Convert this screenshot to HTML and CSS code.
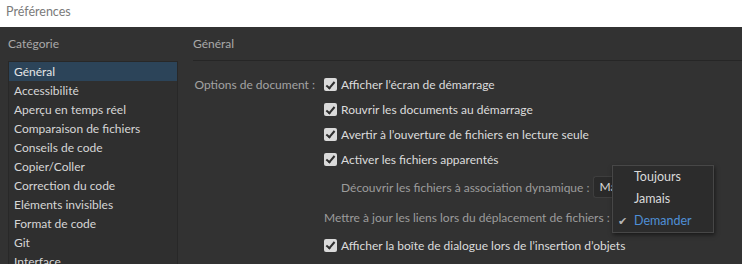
FILE: index.html
```html
<!DOCTYPE html>
<html lang="fr">
<head>
<meta charset="utf-8">
<title>Préférences</title>
<link rel="stylesheet" href="styles.css">
</head>
<body>
<div class="titlebar">Préférences</div>

<div class="window">
   <div class="sidebar">
      <div class="heading">Catégorie</div>
      <ul class="catlist">
         <li class="selected">Général</li>
         <li>Accessibilité</li>
         <li>Aperçu en temps réel</li>
         <li>Comparaison de fichiers</li>
         <li>Conseils de code</li>
         <li>Copier/Coller</li>
         <li>Correction du code</li>
         <li>Eléments invisibles</li>
         <li>Format de code</li>
         <li>Git</li>
         <li>Interface</li>
      </ul>
   </div>

   <div class="content">
      <div class="heading panel-title">Général</div>

      <div class="form">
         <div class="row r1">
            <span class="label">Options de document :</span>
            <span class="check"></span>
            <span class="text">Afficher l’écran de démarrage</span>
         </div>
         <div class="row r2">
            <span class="label"></span>
            <span class="check"></span>
            <span class="text">Rouvrir les documents au démarrage</span>
         </div>
         <div class="row r3">
            <span class="label"></span>
            <span class="check"></span>
            <span class="text">Avertir à l’ouverture de fichiers en lecture seule</span>
         </div>
         <div class="row r4">
            <span class="label"></span>
            <span class="check"></span>
            <span class="text">Activer les fichiers apparentés</span>
         </div>
         <div class="row r5">
            <span class="label"></span>
            <span class="sub">Découvrir les fichiers à association dynamique :</span>
            <span class="select">Manuel</span>
         </div>
         <div class="row r6">
            <span class="label"></span>
            <span class="sub2">Mettre à jour les liens lors du déplacement de fichiers :</span>
         </div>
         <div class="row r7">
            <span class="label"></span>
            <span class="check"></span>
            <span class="text">Afficher la boîte de dialogue lors de l’insertion d’objets</span>
         </div>
      </div>
   </div>

   <ul class="menu">
      <li>Toujours</li>
      <li>Jamais</li>
      <li class="current">Demander</li>
   </ul>
</div>
</body>
</html>
```

FILE: styles.css
```css
/* Boîte de dialogue des préférences, thème sombre */

* {
   box-sizing: border-box;
}

body {
   margin: 0;
   width: 742px;
   height: 264px;
   overflow: hidden;
   font-family: Lato, "Noto Sans", sans-serif;
   font-size: 12px;
   background-color: #323232;
}

.titlebar {
   height: 27px;
   line-height: 24px;
   padding-left: 6px;
   background-color: #ffffff;
   color: #7a7a7a;
   font-size: 12.5px;
}

.window {
   position: relative;
   display: flex;
   height: 237px;
   background-color: #323232;
}

.heading {
   height: 34px;
   line-height: 34px;
   color: #a9a9a9;
}

/* colonne de gauche */

.sidebar {
   width: 178px;
   padding-left: 8px;
   flex-shrink: 0;
}

.catlist {
   list-style: none;
   margin: 0;
   padding: 0;
   height: 210px;
   background-color: #2f2f2f;
   border: 1px solid #282828;
   border-bottom: none;
}

.catlist li {
   height: 19px;
   line-height: 19px;
   padding-left: 5px;
   color: #d6d6d6;
   white-space: nowrap;
}

.catlist li.selected {
   background-color: #2c4459;
   color: #e6e6e6;
}

/* panneau de droite */

.content {
   flex: 1;
   padding-left: 15px;
}

.panel-title {
   border-bottom: 1px solid #262626;
}

.form {
   padding-top: 11px;
}

.row {
   display: flex;
   align-items: center;
   height: 25px;
   white-space: nowrap;
}

.r3 { height: 24px; }
.r4 { height: 26px; }
.r5 { height: 30px; }
.r6 { height: 30px; }
.r7 { height: 26px; }

.label {
   width: 131px;
   padding-right: 9px;
   text-align: right;
   color: #a3a3a3;
}

.check {
   position: relative;
   width: 13px;
   height: 13px;
   margin-right: 4px;
   border-radius: 2px;
   background-color: #dadada;
}

.check::after {
   content: "";
   position: absolute;
   left: 4px;
   top: 1.5px;
   width: 3px;
   height: 7px;
   border: solid #2e2e2e;
   border-width: 0 2px 2px 0;
   transform: rotate(40deg);
}

.text {
   color: #dcdcdc;
}

.sub {
   padding-left: 17px;
   color: #9c9c9c;
}

.sub2 {
   color: #9c9c9c;
}

.select {
   margin-left: 4px;
   width: 40px;
   height: 22px;
   line-height: 20px;
   padding-left: 5px;
   overflow: hidden;
   border: 1px solid #3e3e3e;
   border-right: none;
   border-radius: 3px 0 0 3px;
   background-color: #2a2a2a;
   color: #d8d8d8;
}

/* menu déroulant ouvert */

.menu {
   position: absolute;
   left: 612px;
   top: 138px;
   width: 102px;
   margin: 0;
   padding: 0;
   list-style: none;
   background-color: #2c2c2c;
   border: 1px solid #474747;
   box-shadow: 1px 2px 4px rgba(0, 0, 0, 0.5);
   font-size: 12.5px;
}

.menu li {
   position: relative;
   height: 22px;
   line-height: 22px;
   padding-left: 21px;
   color: #dadada;
}

.menu li.current {
   color: #4f8fd6;
}

.menu li.current::before {
   content: "✔";
   position: absolute;
   left: 5px;
   color: #b5b5b5;
   font-size: 11px;
}
```
